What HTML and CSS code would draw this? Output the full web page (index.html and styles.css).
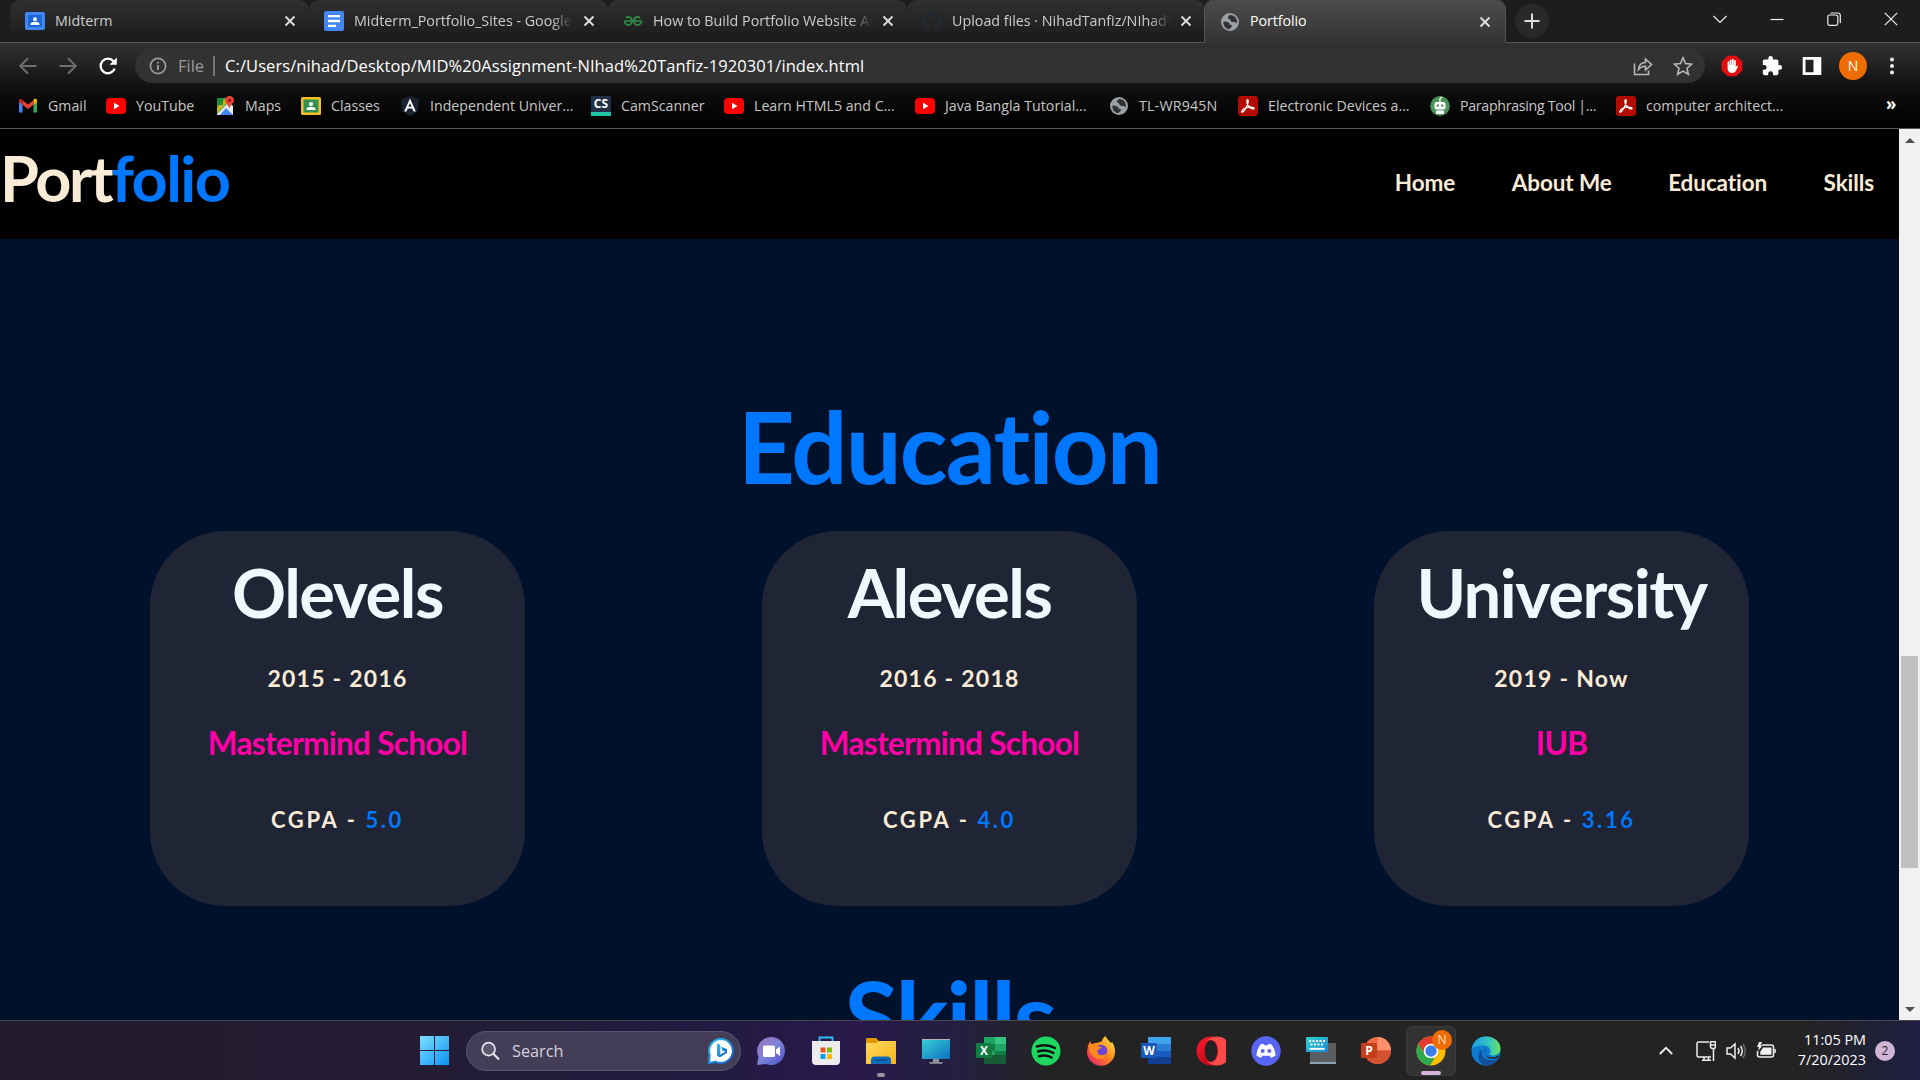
FILE: index.html
```html
<!DOCTYPE html>
<html lang="en">
<head>
<meta charset="utf-8">
<title>Portfolio</title>
<link rel="stylesheet" href="styles.css">
</head>
<body>
<svg class="defs" aria-hidden="true">
  <defs>
    <linearGradient id="gWin" x1="0" y1="0" x2="1" y2="1"><stop offset="0" stop-color="#7fe0ff"/><stop offset="1" stop-color="#0a93f5"/></linearGradient>
    <linearGradient id="gBing" x1="0" y1="0" x2="1" y2="1"><stop offset="0" stop-color="#2ec3ee"/><stop offset="1" stop-color="#1455c8"/></linearGradient>
    <linearGradient id="gTeams" x1="0" y1="0" x2="1" y2="1"><stop offset="0" stop-color="#a274b8"/><stop offset=".5" stop-color="#7b83d8"/><stop offset="1" stop-color="#4b4fc6"/></linearGradient>
    <linearGradient id="gFold" x1="0" y1="0" x2="1" y2="1"><stop offset="0" stop-color="#ffd95c"/><stop offset="1" stop-color="#f8b41c"/></linearGradient>
    <linearGradient id="gScr" x1="0" y1="0" x2="1" y2="1"><stop offset="0" stop-color="#35d0d6"/><stop offset="1" stop-color="#1070c0"/></linearGradient>
    <linearGradient id="gFox" x1="1" y1="0" x2="0" y2="1"><stop offset="0" stop-color="#fff44f"/><stop offset=".45" stop-color="#ff8a1c"/><stop offset="1" stop-color="#e4107a"/></linearGradient>
    <linearGradient id="gKey" x1="0" y1="0" x2="1" y2="1"><stop offset="0" stop-color="#30d3c8"/><stop offset="1" stop-color="#1488d8"/></linearGradient>
    <linearGradient id="gEdge" x1="0" y1="0" x2="1" y2="0"><stop offset="0" stop-color="#1b9de2"/><stop offset=".6" stop-color="#34c6c4"/><stop offset="1" stop-color="#6be35a"/></linearGradient>
    <linearGradient id="gOpera" x1="0" y1="0" x2="1" y2="1"><stop offset="0" stop-color="#ff1b2d"/><stop offset="1" stop-color="#a70014"/></linearGradient>
    <symbol id="close" viewBox="0 0 12 12"><path d="M1.500 1.500l9 9M10.500 1.500l-9 9" stroke="currentColor" stroke-width="1.900" fill="none"/></symbol>
    <symbol id="globe" viewBox="0 0 20 20"><circle cx="10" cy="10" r="9" fill="#9aa0a6"/><path d="M3.500 9.500c2 0 5 .5 5.500 1.500s.5 2 2 2 1 1.500 0 2.500-1.500 1.500-2.500 1.500C5 16.500 3 13 3.500 9.500zM10 3c-1 .5-2.500 1.500-2 3s2.500 1 2.500 2.200 1.500 2 3 1.800 2 .5 3.200 1.500C18 7 15 3.200 10 3z" fill="#333"/></symbol>
    <symbol id="yt" viewBox="0 0 20 16"><rect y="0" width="20" height="16" rx="4" fill="#f00"/><path d="M8 4.800v6.400L13.500 8z" fill="#fff"/></symbol>
    <symbol id="pdf" viewBox="0 0 20 20"><rect width="20" height="20" rx="3" fill="#b30b00"/><path d="M3.800 15.200c1.500-2.600 5.400-4 9-4 2.200 0 3.400.6 3.200 1.300-.3.900-2.500.3-3.900-1C10 9.500 8.600 6.200 9 4.400c.3-1 1.300-.8 1.300.7 0 2.400-2.700 8-4.600 10.200-.9 1-2.300 1-1.900-.1z" fill="none" stroke="#fff" stroke-width="1.300"/></symbol>
  </defs>
</svg>
<div class="screen">
  <header class="browser">
    <div class="tabs">
      <div class="tab first">
        <svg class="fav" viewBox="0 0 20 20"><rect y="1" width="20" height="18" rx="2" fill="#4285f4"/><rect x="3.200" y="4" width="13.600" height="12" fill="#1967d2"/><circle cx="10" cy="8.200" r="2" fill="#fff"/><path d="M5.500 14v-1c0-1.500 2.700-2.300 4.500-2.300s4.500.8 4.500 2.300v1z" fill="#fff"/></svg>
        <span class="title">Midterm</span><svg class="x"><use href="#close"/></svg>
      </div>
      <div class="tab">
        <svg class="fav" viewBox="0 0 20 20"><rect width="20" height="20" rx="2" fill="#4285f4"/><path d="M4 5.200h12M4 10h12M4 14.800h8" stroke="#fff" stroke-width="2.300"/></svg>
        <span class="title fade">Midterm_Portfolio_Sites - Google</span><svg class="x"><use href="#close"/></svg>
      </div>
      <div class="tab">
        <svg class="fav" viewBox="0 0 20 20"><path d="M1.500 10h17M3 6.800C5 4.800 9 6 9 10s-4 5-6 3.200Q1.500 12 1.500 10M17 6.800C15 4.800 11 6 11 10s4 5 6 3.200q1.500-1.200 1.500-3.200" fill="none" stroke="#2f8d46" stroke-width="1.700"/></svg>
        <span class="title fade">How to Build Portfolio Website An</span><svg class="x"><use href="#close"/></svg>
      </div>
      <div class="tab last">
        <svg class="fav" viewBox="0 0 16 16"><path fill="#24292f" d="M8 0C3.580 0 0 3.580 0 8c0 3.540 2.290 6.530 5.470 7.590.4.070.55-.17.55-.38v-1.340c-2.230.48-2.690-1.070-2.690-1.070-.36-.92-.89-1.170-.89-1.170-.72-.49.060-.48.060-.48.8.06 1.230.82 1.230.82.71 1.220 1.870.87 2.330.66.070-.52.280-.87.500-1.070-1.770-.2-3.640-.89-3.640-3.950 0-.87.310-1.590.82-2.150-.08-.2-.36-1.020.08-2.120 0 0 .67-.21 2.200.82a7.600 7.600 0 014 0c1.530-1.040 2.200-.82 2.200-.82.44 1.100.16 1.920.08 2.120.51.56.82 1.270.82 2.150 0 3.070-1.870 3.750-3.650 3.950.29.25.54.73.54 1.480v2.200c0 .21.150.46.550.38A8 8 0 0016 8c0-4.420-3.580-8-8-8z"/></svg>
        <span class="title fade">Upload files · NihadTanfiz/NIhadTa</span><svg class="x"><use href="#close"/></svg>
      </div>
      <div class="tab active">
        <svg class="fav"><use href="#globe"/></svg>
        <span class="title">Portfolio</span><svg class="x"><use href="#close"/></svg>
      </div>
      <div class="newtab"><svg viewBox="0 0 16 16" width="16" height="16"><path d="M8 .5v15M.5 8h15" stroke="#ddd" stroke-width="2"/></svg></div>
      <div class="winctl">
        <svg viewBox="0 0 14 14"><path d="M.5 4l6.500 6.500L13.500 4" /></svg>
        <svg viewBox="0 0 14 14"><path d="M.5 7.500h13"/></svg>
        <svg viewBox="0 0 14 14"><rect x=".8" y="3" width="10" height="10.300" rx="1.800"/><path d="M3.500 1h7.300q2.500 0 2.500 2.500V11"/></svg>
        <svg viewBox="0 0 14 14"><path d="M.8.8l12.400 12.400M13.200.8L.8 13.200"/></svg>
      </div>
    </div>
    <div class="toolbar">
      <div class="navbtns">
        <svg viewBox="0 0 20 20"><path d="M18.500 10H2.500M10 2.200L2.200 10l7.800 7.800" fill="none" stroke="#6e6e6e" stroke-width="2"/></svg>
        <svg viewBox="0 0 20 20"><path d="M1.500 10h16M10 2.200l7.800 7.800-7.800 7.800" fill="none" stroke="#6e6e6e" stroke-width="2"/></svg>
        <svg viewBox="0 0 20 20"><path d="M16.700 12.600A7.300 7.300 0 1 1 15.500 5.200" fill="none" stroke="#fff" stroke-width="2.300"/><path d="M18.800 1.500v7.300h-7.300z" fill="#fff"/></svg>
      </div>
      <div class="omni">
        <svg class="info" viewBox="0 0 18 18"><circle cx="9" cy="9" r="7.600" fill="none" stroke="#9a9a9a" stroke-width="1.700"/><path d="M9 8v5M9 4.700v1.800" stroke="#9a9a9a" stroke-width="1.900"/></svg>
        <span class="file">File</span><span class="bar"></span>
        <span class="url">C:/Users/nihad/Desktop/MID%20Assignment-NIhad%20Tanfiz-1920301/index.html</span>
        <svg class="oi" viewBox="0 0 20 20"><path d="M1.500 7.500v11h14v-4M5.500 13.500c.5-5 3.500-7 7-7V3l6 5.500-6 5.500v-3.800c-3 0-5 .8-7 3.300z"/></svg>
        <svg class="oi" viewBox="0 0 20 20"><path d="M10 1.800l2.500 5.700 6.200.6-4.700 4.100 1.400 6.100L10 15.100l-5.400 3.200L6 12.200 1.300 8.100l6.200-.6z"/></svg>
      </div>
      <div class="ext">
        <svg viewBox="0 0 22 22"><path d="M6.600.8h8.800l6 6v8.400l-6 6H6.600l-6-6V6.800z" fill="#e40d0d"/><path d="M6.600 10.500V6.800q.9-1 1.700 0V10h.4V5q.9-1.100 1.800 0v4.800h.4V4.300q.9-1 1.800 0v5.500h.4V5.500q.9-1 1.700 0v6.700l1.200-1.500q1.100-.4 1 .7l-2.300 4.800q-1 1.800-3.300 1.800-4.800 0-4.800-4.800z" fill="#fff"/></svg>
        <svg viewBox="0 0 24 24"><path d="M20.500 11H19V7c0-1.100-.9-2-2-2h-4V3.500a2.500 2.500 0 0 0-5 0V5H4c-1.100 0-2 .9-2 2v3.800h1.500a2.700 2.700 0 0 1 0 5.400H2V20c0 1.100.9 2 2 2h3.800v-1.500a2.700 2.700 0 0 1 5.400 0V22H17c1.100 0 2-.9 2-2v-4h1.500a2.500 2.500 0 0 0 0-5z" fill="#fff"/></svg>
        <svg viewBox="0 0 22 22"><path d="M1.700 2h18.600v18H1.700zM4.500 4.800v12.400h8V4.800z" fill="#fff" fill-rule="evenodd"/></svg>
        <span class="avatar">N</span>
        <svg class="dots" viewBox="0 0 6 20"><circle cx="3" cy="3.500" r="2"/><circle cx="3" cy="10" r="2"/><circle cx="3" cy="16.500" r="2"/></svg>
      </div>
    </div>
    <div class="bookmarks">
      <a><svg viewBox="0 0 20 20"><path d="M1 4v12.500h3.500V8.500z" fill="#4285f4"/><path d="M15.500 8.500v8H19V4z" fill="#34a853"/><path d="M15.500 4.500v4.300L19 6V4.500c0-1.800-2-2.300-3.500-1z" fill="#fbbc04"/><path d="M1 6l3.500 2.800V4.500l-.5-1C2.500 2.500 1 3 1 4.500z" fill="#c5221f"/><path d="M4.500 4.300l5.500 4.200 5.500-4.200v4.500L10 13 4.500 8.800z" fill="#ea4335"/></svg><span>Gmail</span></a>
      <a><svg><use href="#yt"/></svg><span>YouTube</span></a>
      <a><svg viewBox="0 0 20 20"><path d="M2 2h14v17H2z" fill="#34a853"/><path d="M2 18L14 6l4 4v9H3z" fill="#e8eaed"/><path d="M5 19l6-7 7 7z" fill="#4285f4"/><path d="M2 12l8-9h5L2 17z" fill="#fbbc04" opacity=".8"/><rect x="2" y="2" width="6" height="7" fill="#1e8e3e"/><path d="M14.500 0C11.800 0 10 2 10 4.300c0 3 3.500 4.200 4.500 8.500 1-4.300 4.500-5.500 4.500-8.500C19 2 17.200 0 14.500 0z" fill="#ea4335"/><circle cx="14.500" cy="4.300" r="1.600" fill="#8c1a13"/></svg><span>Maps</span></a>
      <a><svg viewBox="0 0 20 20"><rect y="1" width="20" height="18" rx="1.500" fill="#f6bf26"/><rect x="2.500" y="3.500" width="15" height="13" fill="#34924e"/><circle cx="10" cy="8" r="2.100" fill="#fff"/><path d="M5.500 14v-1c0-1.500 2.700-2.300 4.500-2.300s4.500.8 4.500 2.300v1z" fill="#fff"/></svg><span>Classes</span></a>
      <a><svg viewBox="0 0 20 20"><path d="M10 0l9 3.500-1.500 12L10 20l-7.500-4.500L1 3.500z" fill="#1c2330"/><path d="M10 2.500l5.800 13h-2.300l-1.200-3H7.700l-1.200 3H4.200zm0 4.500l-1.600 3.700h3.200z" fill="#fff" fill-rule="evenodd"/></svg><span>Independent Univer...</span></a>
      <a><b class="cs">CS</b><span>CamScanner</span></a>
      <a><svg><use href="#yt"/></svg><span>Learn HTML5 and C...</span></a>
      <a><svg><use href="#yt"/></svg><span class="java">Java Bangla Tutorial...</span></a>
      <a><svg><use href="#globe"/></svg><span class="tl">TL-WR945N</span></a>
      <a><svg><use href="#pdf"/></svg><span>Electronic Devices a...</span></a>
      <a><svg viewBox="0 0 20 20"><ellipse cx="10" cy="10" rx="9.800" ry="10" fill="#499557"/><rect x="4.500" y="6" width="11" height="7.500" rx="2" fill="#fff"/><path d="M10 6V3l2-2" stroke="#fff" stroke-width="1.500"/><rect x="6" y="14.500" width="8" height="3.500" rx="1" fill="#fff"/><circle cx="7.800" cy="9.500" r="1.200" fill="#499557"/><circle cx="12.200" cy="9.500" r="1.200" fill="#499557"/></svg><span class="para">Paraphrasing Tool |...</span></a>
      <a><svg><use href="#pdf"/></svg><span>computer architect...</span></a>
      <a class="more">»</a>
    </div>
  </header>

  <div class="view">
    <main class="page">
      <nav class="nav">
        <div class="logo"><span class="port">Port</span><span class="folio">folio</span></div>
        <ul class="links"><li>Home</li><li>About Me</li><li>Education</li><li>Skills</li></ul>
      </nav>
      <h1 class="heading">Education</h1>
      <section class="cards">
        <article class="card"><h2>Olevels</h2><p class="years">2015 - 2016</p><p class="school">Mastermind School</p><p class="gpa">CGPA - <em>5.0</em></p></article>
        <article class="card"><h2>Alevels</h2><p class="years">2016 - 2018</p><p class="school">Mastermind School</p><p class="gpa">CGPA - <em>4.0</em></p></article>
        <article class="card"><h2>University</h2><p class="years">2019 - Now</p><p class="school">IUB</p><p class="gpa">CGPA - <em>3.16</em></p></article>
      </section>
      <h1 class="heading second">Skills</h1>
    </main>
    <div class="scroll"><i class="up"></i><i class="thumb"></i><i class="down"></i></div>
  </div>

  <footer class="taskbar">
    <div class="apps">
      <svg class="start" viewBox="0 0 29 29"><path d="M0 0h14v14H0zM15 0h14v14H15zM0 15h14v14H0zM15 15h14v14H15z" fill="url(#gWin)"/></svg>
      <div class="search">
        <svg viewBox="0 0 20 20" width="19" height="20"><circle cx="8" cy="8" r="6.800" fill="#ffffff22" stroke="#e6e3ea" stroke-width="1.800"/><path d="M13 13l6 6" stroke="#e6e3ea" stroke-width="2.200"/></svg>
        <span class="stext">Search</span>
        <svg viewBox="0 0 26 26" width="26" height="26"><path d="M13 1a12 12 0 1 1-5.500 22.700L1 25l.8-8A12 12 0 0 1 13 1z" fill="#fff" stroke="url(#gBing)" stroke-width="2"/><path d="M9 5.500l3.300 1.200v9.800l5-2.800-3-1.300-1.300-3.600 6 2.200v4l-7.400 4.500L9 17.200z" fill="url(#gBing)"/></svg>
      </div>
      <svg viewBox="0 0 30 30"><path d="M15 1a14 14 0 1 1-5 27.100L1 29l1.500-8A14 14 0 0 1 15 1z" fill="url(#gTeams)"/><rect x="7" y="9.500" width="12" height="11.500" rx="1.500" fill="#fff"/><path d="M20 13.500l4-3v9.500l-4-3z" fill="#fff"/></svg>
      <svg viewBox="0 0 30 30"><path d="M8.500 7V1.500h13V7" fill="none" stroke="#2ec0f5" stroke-width="1.800"/><path d="M1 5h28v20q0 4-4 4H5q-4 0-4-4z" fill="#ececec"/><path d="M9.500 11.500h5v5h-5z" fill="#f25022"/><path d="M16 11.500h5v5h-5z" fill="#7fba00"/><path d="M9.500 18h5v5h-5z" fill="#00a4ef"/><path d="M16 18h5v5h-5z" fill="#ffb900"/></svg>
      <div class="run"><svg viewBox="0 0 30 30"><path d="M0 3q0-1 1-1h9l3 3-3 4H0z" fill="#e09a00"/><path d="M0 7h10l3-2h17v23H0z" fill="url(#gFold)"/><path d="M5 28v-4q0-3.500 3.500-3.500h13q3.500 0 3.500 3.500v4z" fill="#0f6cbd"/><path d="M9 24h12" stroke="#0a4a8c" stroke-width="1.500"/></svg><i></i></div>
      <svg viewBox="0 0 30 30"><path d="M1 3h28v20H1z" fill="url(#gScr)"/><path d="M1 3h28v1H1z" fill="#a9b4bb"/><path d="M12 23h6v3h3.500v1.800h-13V26H12z" fill="#8e9599"/></svg>
      <svg viewBox="0 0 30 30"><path d="M8 1h22v27H8z" fill="#21a366"/><path d="M19 1h11v7H19z" fill="#33c481"/><path d="M8 8h11v7H8zM19 15h11v6H19z" fill="#107c41"/><path d="M8 19h22v9H8z" fill="#185c37"/><rect y="7" width="16" height="15" rx="1" fill="#107c41"/><text x="8" y="18.500" class="ltr">X</text></svg>
      <svg viewBox="0 0 30 30"><circle cx="15" cy="15" r="14.500" fill="#1ed760"/><path d="M6 10.500c6-2 13-1.500 18 1.500M7 15.500c5-1.500 11-1 15.500 1.500M8 20.200c4-1.200 9-.8 12.500 1.300" fill="none" stroke="#111" stroke-width="2.500" stroke-linecap="round"/></svg>
      <svg viewBox="0 0 30 30"><path d="M1.500 13c0-4 2-6.500 3-8l1 3.500C7 7 9 7 10 7c3-.5 4.500-2 6-1.500 0-2.500 2-4.500 3.500-5.500 1 3 4 4.500 5 7l1.500-1c2 3 3 6 3 9.500a14 14 0 0 1-28 .5z" fill="url(#gFox)"/><circle cx="15" cy="15" r="6.200" fill="#6b46d6"/><path d="M2.500 9c4-2 8-1 10 1.500l3 .5c-.5 2-4 2.500-4 3.500-.5 5 5 6 8.500 3-1 5-6 6.500-10 4.500C5 20 3 15 2.500 9z" fill="#ff8a1c"/></svg>
      <svg viewBox="0 0 30 30"><path d="M7 1h23v8H7z" fill="#41a5ee"/><path d="M7 8h23v7H7z" fill="#2b7cd3"/><path d="M7 15h23v7H7z" fill="#185abd"/><path d="M7 21h23v7H7z" fill="#103f91"/><rect y="7" width="16" height="15" rx="1" fill="#185abd"/><text x="8" y="18.500" class="ltr">W</text></svg>
      <svg viewBox="0 0 30 30"><circle cx="15" cy="15" r="14.500" fill="url(#gOpera)"/><path d="M11 4.500a14.400 14.400 0 1 1 0 21c8 2 11-4 11-10.500S19 2.500 11 4.500z" fill="#ff4a4a"/><ellipse cx="15" cy="15" rx="6.300" ry="10.800" fill="#232323"/></svg>
      <svg viewBox="0 0 30 30"><circle cx="15" cy="15" r="14.700" fill="#5865f2"/><path d="M9.500 8.500l3-.8 1 1.500h3l1-1.500 3 .8q3.800 5 4 11-2.500 2-4.700 2.200l-1.200-2h-7.200l-1.200 2Q8 21.500 5.500 19.500q.2-6 4-11z" fill="#fff"/><circle cx="11.700" cy="15" r="2" fill="#5865f2"/><circle cx="18.300" cy="15" r="2" fill="#5865f2"/></svg>
      <svg viewBox="0 0 30 30"><path d="M4 7h26v20.500H4z" fill="#5a5e63"/><path d="M4 26h26v2H4z" fill="#8fa3b5"/><rect y="1" width="22" height="15" rx="1" fill="url(#gKey)"/><path d="M3 5h16M4.500 8.500h13" stroke="#fff" stroke-width="2" stroke-dasharray="2 1.500"/><path d="M3.500 12.800h15" stroke="#fff" stroke-width="2"/></svg>
      <svg viewBox="0 0 30 30"><circle cx="16.500" cy="14.500" r="13.500" fill="#ed6c47"/><path d="M16.500 1A13.500 13.500 0 0 1 30 14.500H16.500z" fill="#ff8f6b"/><path d="M3 14.500h27a13.500 13.500 0 0 1-27 0z" fill="#d35230"/><rect y="7" width="16" height="15" rx="1" fill="#c43e1c"/><text x="8" y="18.500" class="ltr">P</text></svg>
      <div class="chrome"><svg viewBox="0 0 30 30"><circle cx="15" cy="15" r="14.500" fill="#fbbc04"/><path d="M2.400 7.800A14.500 14.500 0 0 1 27.600 7.800H15L8.800 18.600z" fill="#e33b2e"/><path d="M2.400 7.800L8.800 18.600 15 22.200l4 -1-5 8.300A14.500 14.500 0 0 1 2.400 7.800z" fill="#2da94f"/><circle cx="15" cy="15" r="7.300" fill="#fff"/><circle cx="15" cy="15" r="5.700" fill="#3b7ded"/></svg><b>N</b><i></i></div>
      <svg viewBox="0 0 30 30"><circle cx="15" cy="15" r="14.500" fill="#0c7bd0"/><path d="M.7 13C2 5 8 .5 15 .5c9 0 14.500 6 14.500 12 0 4.500-3.500 7-7.500 7-3 0-4-1.300-3-2.500C21 13 17 9.500 12.500 9.500 7 9.500 2.500 11 .7 13z" fill="url(#gEdge)"/><path d="M11 14c-1.500 6 3 12 15.500 9.500C23 29 17 30.500 12 28.500 6 25 6 17 11 14z" fill="#12509c"/><path d="M14.500 12.500c-1.500 2-1.300 6 2.500 8 3.500 1.700 8 1 12-1.500l-2.300 3C20 25 12 21 14.500 12.500z" fill="#232323"/></svg>
    </div>
    <div class="tray">
      <svg viewBox="0 0 14 14" width="14" height="14"><path d="M.8 10L7 3.800l6.200 6.200" fill="none" stroke="#eee" stroke-width="1.800"/></svg>
      <div class="sys">
      <svg viewBox="0 0 20 20"><path d="M13 1H2.500Q1 1 1 2.500v12Q1 16 2.500 16H15M6 19.300h9M8 16v3M12.500 16v3M17.500 8v12M14.500.8h5v5q0 1.500-2.500 2-2.500-.5-2.500-2zM14.500 4h5"/></svg>
      <svg viewBox="0 0 20 20"><path d="M1 7v6h3.500l4.500 4V3L4.500 7zM12 7q2 3 0 6M14.500 5q3.500 5 0 10"/><path d="M17 3q4.500 7 0 14" opacity=".35"/></svg>
      <svg viewBox="0 0 20 20"><path d="M6 4h9.500Q17.500 4 17.500 6v8q0 2-2 2h-12Q1.500 16 1.500 14v-4"/><path d="M7 6.500h8.500v7.200H4.200V11zM18.300 8h1.500v4h-1.500zM3 1l-2 5h2l-1 4 4.500-5.500H4.500L6 1z" fill="#eee" stroke="none"/></svg>
      </div>
      <div class="clock"><span>11:05 PM</span><span>7/20/2023</span></div>
      <b class="count">2</b>
    </div>
  </footer>
</div>
</body>
</html>
```
FILE: styles.css
```css
* { box-sizing: border-box; }
body { margin: 0; background: #000; font-family: "Open Sans", "Noto Sans", sans-serif; overflow: hidden; }
.defs { position: absolute; width: 0; height: 0; }
svg { display: block; flex: none; }
.screen { width: 1920px; height: 1080px; display: flex; flex-direction: column; overflow: hidden; }

/* browser chrome */
.browser { height: 129px; background: linear-gradient(#333 42px, #0d0d0d 92px, #000 128px); border-bottom: 1px solid #555; color: #ccc; }
.tabs { height: 43px; display: flex; padding-left: 10px; background: #1d1d1d; border-bottom: 1px solid #555; }
.tab { width: 299px; height: 42px; display: flex; align-items: center; padding: 0 13px 0 15px; background: linear-gradient(#303030, #1d1d1d 36px); border-radius: 10px 10px 0 0; font-size: 14.300px; position: relative; }
.tab::after { content: ""; position: absolute; right: -1px; top: 10px; width: 1px; height: 24px; background: #666; }
.tab.last::after, .tab.active::after { display: none; }
.tab.last { width: 298px; border-radius: 10px 10px 10px 0; }
.tab.active { width: 300px; height: 43px; padding-right: 14px; background: linear-gradient(#4c4c4c, #333); color: #fff; box-shadow: 0 0 0 1px #555; clip-path: inset(0 -1px 0 -1px); }
.fav { width: 20px; height: 20px; margin-right: 10px; }
.title { white-space: nowrap; overflow: hidden; line-height: 20px; padding-bottom: 1px; }
.title.fade { width: 219px; -webkit-mask: linear-gradient(90deg, #000 90%, transparent); mask: linear-gradient(90deg, #000 90%, transparent); }
.active .title { letter-spacing: -0.100px; }
.x { width: 12px; height: 12px; margin-left: auto; color: #ddd; }
.newtab { width: 34px; height: 34px; margin: 4px 0 0 10px; border-radius: 50%; background: #292929; display: grid; place-items: center; }
.winctl { display: flex; gap: 43px; margin: 12px 22px 0 auto; }
.winctl svg { width: 14px; height: 14px; fill: none; stroke: #eee; stroke-width: 1.200; }
.toolbar { height: 45px; display: flex; align-items: center; padding-left: 18px; }
.navbtns { display: flex; gap: 20px; width: 117px; }
.navbtns svg { width: 20px; height: 20px; }
.omni { width: 1570px; height: 35px; border-radius: 18px; background: #323232; display: flex; align-items: center; padding: 0 12px 0 14px; font-size: 16.500px; color: #fff; }
.info { width: 18px; height: 18px; }
.file { margin-left: 11px; width: 35px; color: #9a9a9a; }
.bar { width: 2px; height: 20px; background: #777; margin-right: 10px; }
.url { white-space: nowrap; letter-spacing: 0.080px; }
.oi { width: 20px; height: 20px; fill: none; stroke: #b8b8b8; stroke-width: 1.600; margin-left: 20px; }
.url + .oi { margin-left: auto; }
.ext { display: flex; align-items: center; margin-left: 16px; gap: 18px; }
.ext svg { width: 22px; height: 22px; }
.ext .avatar { width: 28px; height: 28px; border-radius: 50%; background: #ef6c00; color: #fff; font-size: 14px; display: grid; place-items: center; margin-left: -2px; }
.ext .dots { width: 6px; height: 20px; fill: #eee; margin-left: 4px; }
.bookmarks { height: 40px; padding: 0 0 5px 18px; display: grid; grid-template-columns: 88px 109px 86px 99px 191px 133px 191px 194px 129px 192px 186px 270px 20px; align-items: center; font-size: 14.200px; color: #c6c6c6; }
.bookmarks a { display: flex; align-items: center; gap: 10px; white-space: nowrap; }
.bookmarks svg { width: 20px; height: 20px; }
.bookmarks .tl { letter-spacing: 0.200px; }
.bookmarks .java { letter-spacing: 0.020px; }
.bookmarks .para { letter-spacing: -0.300px; }
.cs { width: 20px; height: 20px; background: #232f44; border-bottom: 4px solid #1fc2a1; color: #fff; font-size: 12px; line-height: 16px; text-align: center; }
.bookmarks .more { font-size: 17px; font-weight: 700; color: #fff; padding-bottom: 4px; }

/* web page */
.view { height: 891px; display: flex; }
.page { width: 1899px; background: #00112c; overflow: hidden; font-family: Lato, sans-serif; font-weight: 700; font-variant-ligatures: none; }
.nav { height: 110px; background: #000; display: flex; justify-content: space-between; color: #faebd7; }
.logo { font-size: 63px; line-height: 80px; padding: 9px 0 0 0; white-space: nowrap; letter-spacing: -2.300px; }
.folio { color: #0077ff; letter-spacing: -1.600px; }
.links { list-style: none; margin: 0; padding: 39px 25px 0 0; display: flex; gap: 56.500px; font-size: 22.500px; line-height: 30px; letter-spacing: -0.100px; white-space: nowrap; }
.heading { margin: 147px 0 0; height: 120px; font-size: 99px; line-height: 120px; letter-spacing: -1.800px; color: #0077ff; text-align: center; font-weight: 700; }
.heading.second { margin-top: 50px; letter-spacing: -2.300px; }
.cards { display: flex; gap: 237px; padding-left: 150px; margin-top: 25px; }
.card { width: 375px; height: 375px; border-radius: 75px; background: #1f2534; text-align: center; white-space: nowrap; padding-top: 21px; }
.card h2 { margin: 0; font-size: 67px; line-height: 80px; letter-spacing: -1.500px; color: #f0f8ff; }
.card p { margin: 0; color: #faebd7; }
.card .years { font-size: 23px; line-height: 30px; letter-spacing: 1.250px; margin-top: 31px; }
.card .school { font-size: 31.500px; line-height: 40px; letter-spacing: -0.700px; margin-top: 30px; color: #ff00a6; }
.card .gpa { font-size: 22px; line-height: 30px; letter-spacing: 2.600px; margin-top: 42px; }
.card em { font-style: normal; color: #0077ff; }
.scroll { width: 21px; background: #f1f1f1; display: flex; flex-direction: column; align-items: center; }
.up, .down { border: 5px solid transparent; border-top: 0; border-bottom: 5px solid #505050; margin-top: 9px; }
.thumb { width: 17px; height: 212px; background: #c1c1c1; margin-top: 513px; }
.down { border-bottom: 0; border-top: 5px solid #505050; margin-top: auto; margin-bottom: 8px; }

/* taskbar */
.taskbar { height: 60px; display: flex; border-top: 1px solid #4a4650; background: linear-gradient(90deg, #231b2e, #241c33 400px, #211c40 650px, #28194a 860px, #232040 960px, #232323 1050px, #232323 1800px, #1e1f42); }
.apps { width: 1502px; padding-left: 420px; display: flex; align-items: center; gap: 25px; }
.apps > svg, .run svg, .chrome svg { width: 30px; height: 30px; }
.apps > .start { width: 29px; height: 29px; margin-right: -8px; }
.search { width: 275px; height: 40px; flex: none; border-radius: 20px; background: #443d58; border: 1px solid #5b556c; display: flex; align-items: center; padding: 0 6px 0 14px; margin-right: -10px; color: #d5d2db; font-size: 16.300px; }
.stext { margin: 0 auto 0 12px; }
.run { position: relative; }
.run i { position: absolute; left: 11px; bottom: -11px; width: 8px; height: 4px; border-radius: 2px; background: #9a94a4; }
.chrome { position: relative; width: 50px; height: 50px; flex: none; margin: 0 -10px; border-radius: 6px; background: #323232; border: 1px solid #3c3c3c; display: grid; place-items: center; }
.chrome b { position: absolute; right: 3px; top: 3px; width: 20px; height: 20px; border-radius: 50%; background: #ef6c00; color: #f7dfcb; font: 12px/20px "Open Sans", sans-serif; text-align: center; }
.chrome i { position: absolute; bottom: 0; left: 14px; width: 20px; height: 4px; border-radius: 2px; background: #d0b5d6; }
.ltr { fill: #fff; font: 700 12px "Open Sans", sans-serif; text-anchor: middle; }
.tray { margin-left: 157px; display: flex; align-items: center; color: #fff; }
.sys { display: flex; gap: 10px; margin-left: 23px; }
.sys svg { width: 20px; height: 20px; fill: none; stroke: #eee; stroke-width: 1.500; }
.clock { width: 90px; display: flex; flex-direction: column; align-items: flex-end; padding-bottom: 2px; font-size: 14.400px; line-height: 20px; white-space: nowrap; }
.count { width: 20px; height: 20px; margin-left: 9px; border-radius: 50%; background: #d0b5d6; color: #222; font: 12px/20px "Open Sans", sans-serif; text-align: center; }
```
